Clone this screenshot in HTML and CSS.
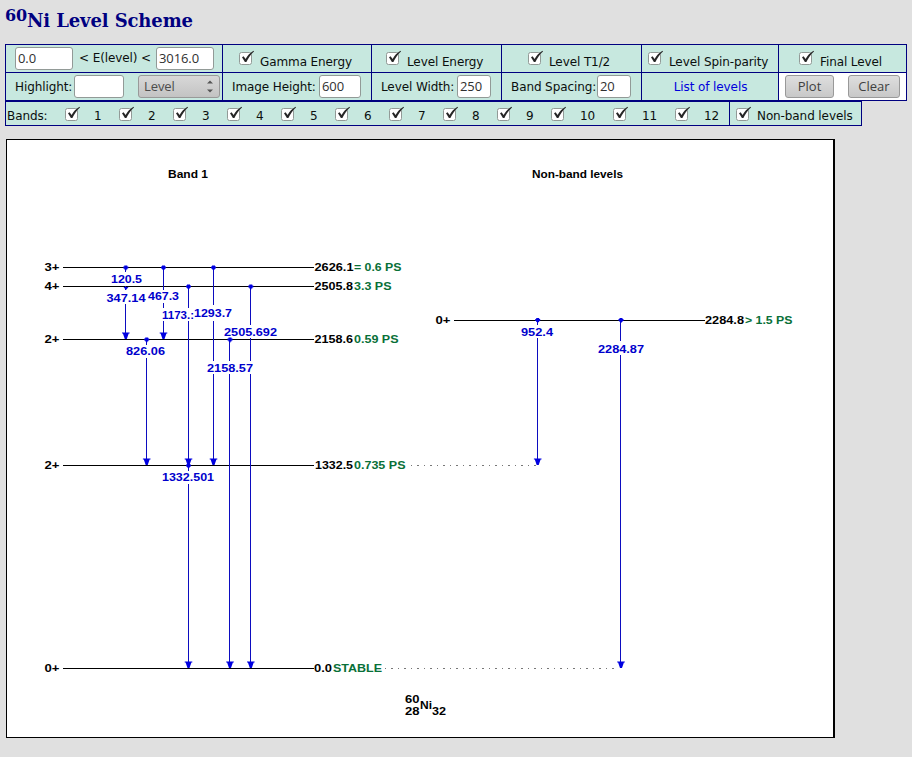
FILE: index.html
```html
<!DOCTYPE html>
<html lang="en">
<head>
<meta charset="utf-8">
<title>60Ni Level Scheme</title>
<link rel="stylesheet" href="styles.css">
</head>
<body>
<svg class="defs" width="0" height="0" aria-hidden="true">
  <symbol id="check" viewBox="0 0 16 15">
    <rect x=".5" y="2.5" width="12" height="12" rx="2" fill="#fff" stroke="#929a97"/>
    <path d="M3 7.2 4.6 6.2 6.6 9C8.5 5.5 11 2.8 14.5 .8L15 1.4C11.7 4.4 9.2 8 7.4 12H5.9Z" fill="#262626"/>
  </symbol>
</svg>
<h1><sup>60</sup>Ni Level Scheme</h1>
<form class="controls">
  <div class="cell range"><input class="field w58" value="0.0"><span class="lt">&lt; E(level) &lt;</span><input class="field w58" value="3016.0"></div>
  <label class="cell opt p16"><svg class="check"><use href="#check"/></svg><span>Gamma Energy</span></label>
  <label class="cell opt p14"><svg class="check"><use href="#check"/></svg><span>Level Energy</span></label>
  <label class="cell opt p26"><svg class="check"><use href="#check"/></svg><span>Level T1/2</span></label>
  <label class="cell opt p6"><svg class="check"><use href="#check"/></svg><span>Level Spin-parity</span></label>
  <label class="cell opt p20"><svg class="check"><use href="#check"/></svg><span>Final Level</span></label>

  <div class="cell second p9"><span class="name hl">Highlight:</span><input class="field w50"><div class="select"><span>Level</span><svg width="6" height="13" viewBox="0 0 6 13"><path d="M0 3.5 3 .5 6 3.5ZM0 9.5 3 12.5 6 9.5Z" fill="#555"/></svg></div></div>
  <div class="cell second p9"><span class="name ih">Image Height:</span><input class="field w42" value="600"></div>
  <div class="cell second p9"><span class="name lw">Level Width:</span><input class="field w34" value="250"></div>
  <div class="cell second p9"><span class="name bs">Band Spacing:</span><input class="field w34" value="20"></div>
  <div class="cell second link"><a>List of levels</a></div>
  <div class="cell second buttons"><button type="button" class="plot">Plot</button><button type="button" class="clear">Clear</button></div>
</form>
<div class="bands">
  <div class="band-list">
    <span class="bands-name">Bands:</span>
    <label><svg class="check"><use href="#check"/></svg>1</label>
    <label><svg class="check"><use href="#check"/></svg>2</label>
    <label><svg class="check"><use href="#check"/></svg>3</label>
    <label><svg class="check"><use href="#check"/></svg>4</label>
    <label><svg class="check"><use href="#check"/></svg>5</label>
    <label><svg class="check"><use href="#check"/></svg>6</label>
    <label><svg class="check"><use href="#check"/></svg>7</label>
    <label><svg class="check"><use href="#check"/></svg>8</label>
    <label><svg class="check"><use href="#check"/></svg>9</label>
    <label class="wide"><svg class="check"><use href="#check"/></svg>10</label>
    <label class="wide"><svg class="check"><use href="#check"/></svg>11</label>
    <label class="last"><svg class="check"><use href="#check"/></svg>12</label>
  </div>
  <label class="nonband"><svg class="check"><use href="#check"/></svg><span>Non-band levels</span></label>
</div>
<svg class="chart" width="829" height="599" viewBox="6 139 829 599">
  <defs>
    <path id="dot" d="M-1.5-2.500h3v1h1v2h-1v1h-1v1h-1v-1h-1v-1h-1v-2h1z"/>
    <path id="tip" d="M-3.8-7h7.600v1h-.9L1-.5H-1L-2.900-6h-.9z"/>
  </defs>
  <rect x="6" y="139" width="829" height="599" fill="#000"/>
  <rect x="7" y="140" width="826" height="597" fill="#fff"/>
  <g class="level">
    <path d="M63 267.5H314M63 286.5H314M63 339.5H314M63 465.5H314M63 668.5H314M454 320.5H705"/>
  </g>
  <path class="dots" d="M411 465.5H537M385 668.5H619"/>
  <g class="gamma">
    <path d="M125.500 267V338M163.500 267V338M188.500 286V464M213.500 267V464M146.500 339V464M229.500 339V667M250.500 286V667M188.500 465V667M537.500 320V464M620.500 320V667"/>
  </g>
  <g class="blank">
    <rect x="110" y="272" width="32" height="14"/>
    <rect x="106" y="290" width="40" height="14"/>
    <rect x="148" y="290" width="32" height="13"/>
    <rect x="162" y="308" width="52" height="13"/>
    <rect x="224" y="325" width="53" height="13"/>
    <rect x="125" y="345" width="41" height="13"/>
    <rect x="207" y="361" width="46" height="13"/>
    <rect x="162" y="471" width="52" height="13"/>
    <rect x="521" y="325" width="33" height="13"/>
    <rect x="598" y="341" width="46" height="14"/>
    <rect x="194" y="305" width="39" height="16"/>
  </g>
  <g class="mark">
    <use href="#dot" x="125.800" y="268"/><use href="#dot" x="163.500" y="268"/><use href="#dot" x="213.500" y="268"/>
    <path d="M123.500 287h5l-2.500 3z"/>
    <use href="#dot" x="188.500" y="287"/><use href="#dot" x="250.800" y="287"/>
    <use href="#dot" x="146.700" y="340"/><use href="#dot" x="230" y="340"/>
    <use href="#dot" x="188.500" y="466"/><use href="#dot" x="537.700" y="320.500"/><use href="#dot" x="621" y="320.500"/>
    <use href="#tip" x="125.800" y="339.500"/><use href="#tip" x="163.500" y="339.500"/>
    <use href="#tip" x="146.700" y="465.500"/><use href="#tip" x="188.500" y="465.500"/><use href="#tip" x="213.500" y="465.500"/><use href="#tip" x="537.700" y="465.500"/>
    <use href="#tip" x="188.500" y="668.500"/><use href="#tip" x="230" y="668.500"/><use href="#tip" x="250.800" y="668.500"/><use href="#tip" x="621" y="668.500"/>
  </g>
  <g class="energy">
    <text x="111" y="283" textLength="31" lengthAdjust="spacingAndGlyphs">120.5</text>
    <text x="106.500" y="302" textLength="39" lengthAdjust="spacingAndGlyphs">347.14</text>
    <text x="148" y="300" textLength="31" lengthAdjust="spacingAndGlyphs">467.3</text>
    <text x="162" y="319" textLength="32" lengthAdjust="spacingAndGlyphs">1173.:</text>
    <text x="194" y="317" textLength="38" lengthAdjust="spacingAndGlyphs">1293.7</text>
    <text x="224" y="336" textLength="53" lengthAdjust="spacingAndGlyphs">2505.692</text>
    <text x="126" y="355" textLength="39" lengthAdjust="spacingAndGlyphs">826.06</text>
    <text x="207" y="372" textLength="46" lengthAdjust="spacingAndGlyphs">2158.57</text>
    <text x="162" y="481" textLength="52" lengthAdjust="spacingAndGlyphs">1332.501</text>
    <text x="521" y="336" textLength="32" lengthAdjust="spacingAndGlyphs">952.4</text>
    <text x="598" y="353" textLength="46" lengthAdjust="spacingAndGlyphs">2284.87</text>
  </g>
  <g class="label">
    <text x="168" y="178" textLength="40" lengthAdjust="spacingAndGlyphs">Band 1</text>
    <text x="532" y="178" textLength="91" lengthAdjust="spacingAndGlyphs">Non-band levels</text>
    <text x="44.500" y="271" textLength="15" lengthAdjust="spacingAndGlyphs">3+</text>
    <text x="44.500" y="290" textLength="15" lengthAdjust="spacingAndGlyphs">4+</text>
    <text x="44.500" y="343" textLength="15" lengthAdjust="spacingAndGlyphs">2+</text>
    <text x="44.500" y="469" textLength="15" lengthAdjust="spacingAndGlyphs">2+</text>
    <text x="44.500" y="672" textLength="15" lengthAdjust="spacingAndGlyphs">0+</text>
    <text x="435.500" y="324" textLength="15" lengthAdjust="spacingAndGlyphs">0+</text>
    <text x="314.500" y="271" textLength="39" lengthAdjust="spacingAndGlyphs">2626.1</text>
    <text x="314.500" y="290" textLength="38.500" lengthAdjust="spacingAndGlyphs">2505.8</text>
    <text x="314.500" y="343" textLength="38.500" lengthAdjust="spacingAndGlyphs">2158.6</text>
    <text x="315" y="469" textLength="38" lengthAdjust="spacingAndGlyphs">1332.5</text>
    <text x="314" y="672" textLength="18" lengthAdjust="spacingAndGlyphs">0.0</text>
    <text x="705" y="324" textLength="39" lengthAdjust="spacingAndGlyphs">2284.8</text>
    <text x="405" y="703" textLength="14.500" lengthAdjust="spacingAndGlyphs">60</text>
    <text x="405" y="715" textLength="14.500" lengthAdjust="spacingAndGlyphs">28</text>
    <text x="420" y="709" textLength="12" lengthAdjust="spacingAndGlyphs">Ni</text>
    <text x="432" y="715" textLength="14" lengthAdjust="spacingAndGlyphs">32</text>
  </g>
  <g class="half-life">
    <text x="354" y="271" textLength="47.500" lengthAdjust="spacingAndGlyphs">= 0.6 PS</text>
    <text x="354" y="290" textLength="37.500" lengthAdjust="spacingAndGlyphs">3.3 PS</text>
    <text x="354" y="343" textLength="44.500" lengthAdjust="spacingAndGlyphs">0.59 PS</text>
    <text x="354" y="469" textLength="51.500" lengthAdjust="spacingAndGlyphs">0.735 PS</text>
    <text x="333" y="672" textLength="49" lengthAdjust="spacingAndGlyphs">STABLE</text>
    <text x="745" y="324" textLength="47.500" lengthAdjust="spacingAndGlyphs">&gt; 1.5 PS</text>
  </g>
</svg>
</body>
</html>
```
FILE: styles.css
```css
* { box-sizing: border-box; }
body {
  margin: 0;
  padding: 0 5px;
  background: #e0e0e0;
  color: #0b0f0e;
  font: 12px/15px "DejaVu Sans", sans-serif;
  letter-spacing: -.1px;
  overflow: hidden;
}
.defs { display: none; }
h1 {
  margin: 0;
  height: 44px;
  padding-top: 8px;
  font: bold 18px/26px "DejaVu Serif", serif;
  letter-spacing: -.12px;
  color: #000080;
  white-space: nowrap;
}
h1 sup { font-size: 16px; line-height: 0; vertical-align: 6px; }
.controls {
  display: grid;
  grid-template-columns: 217px 149px 130px 140px 137px 128px;
  grid-template-rows: 27px 28px;
  width: 902px;
  border: 1px solid #000080;
  border-width: 1px 1px 1px 0;
}
.cell {
  display: flex;
  align-items: center;
  border-left: 1px solid #000080;
  background: #c7e8df;
  white-space: nowrap;
}
.second { border-top: 1px solid #000080; }
.check { display: block; width: 16px; height: 15px; flex: none; }
.opt { align-items: flex-start; padding-top: 5px; }
.opt span { margin: 5px 0 0 5px; }
.range { padding-left: 9px; }
.lt { width: 83px; padding-left: 6px; }
.p6 { padding-left: 6px; }
.p9 { padding-left: 9px; }
.p14 { padding-left: 14px; }
.p16 { padding-left: 16px; }
.p20 { padding-left: 20px; }
.p26 { padding-left: 26px; }
.field {
  height: 23px;
  padding: 0 2px 1px;
  border: 1px solid #929a97;
  border-radius: 3px;
  background: #fff;
  color: #303030;
  font: 13px/20px "Open Sans", sans-serif;
  letter-spacing: -.1px;
  flex: none;
}
.w58 { width: 58px; }
.w50 { width: 50px; }
.w42 { width: 42px; }
.w34 { width: 34px; }
.name { flex: none; padding-top: 1px; }
.hl { width: 59px; }
.ih { width: 87px; }
.lw { width: 76px; }
.bs { width: 86px; }
.select {
  display: flex;
  align-items: center;
  justify-content: space-between;
  width: 82px;
  height: 23px;
  margin-left: 14px;
  padding: 0 6px 0 5px;
  border: 1px solid #999;
  border-radius: 3px;
  background: linear-gradient(#d8d8d8, #c3c3c3);
  color: #4c4c4c;
  font: 13px/20px "Open Sans", sans-serif;
}
.select span { padding-bottom: 1px; }
.link { justify-content: center; padding: 2px 0 0 1px; color: #0000dc; }
.buttons { padding-left: 6px; background: #fff; }
button {
  height: 23px;
  padding: 0 0 2px;
  border: 1px solid #999;
  border-radius: 3px;
  background: linear-gradient(#dedede, #c8c8c8);
  color: #404040;
  font: 13px/20px "Open Sans", sans-serif;
}
.plot { width: 49px; margin-right: 14px; }
.clear { width: 52px; }
.bands {
  display: grid;
  grid-template-columns: 724px 131px;
  width: 857px;
  height: 25px;
  border: 1px solid #000080;
  background: #c7e8df;
}
.bands label { display: flex; flex: none; width: 54px; padding-top: 7px; }
.bands .check { margin: -3px 13px 0 0; }
.bands label.wide { width: 62px; }
.bands label.last { width: 48px; }
.band-list { display: flex; border-right: 1px solid #000080; }
.bands-name { width: 59px; padding: 7px 0 0 1px; flex: none; }
.bands .nonband { width: 131px; padding-left: 6px; white-space: nowrap; }
.bands .nonband .check { margin-right: 5px; }
.chart { display: block; margin: 13px 0 0 1px; letter-spacing: 0; }
.level { stroke: #000; stroke-width: 1; fill: none; shape-rendering: crispEdges; }
.dots { stroke: #777; stroke-width: 1; stroke-dasharray: 1 5 2 5; fill: none; }
.gamma { stroke: #0c0cc0; stroke-width: 1; fill: none; shape-rendering: crispEdges; }
.blank { fill: #fff; }
.mark { fill: #0000e0; }
.chart text { font: bold 11.5px "Liberation Sans", sans-serif; }
.energy text { fill: #0000cc; }
.label { fill: #000; }
.half-life { fill: #087038; }
```
